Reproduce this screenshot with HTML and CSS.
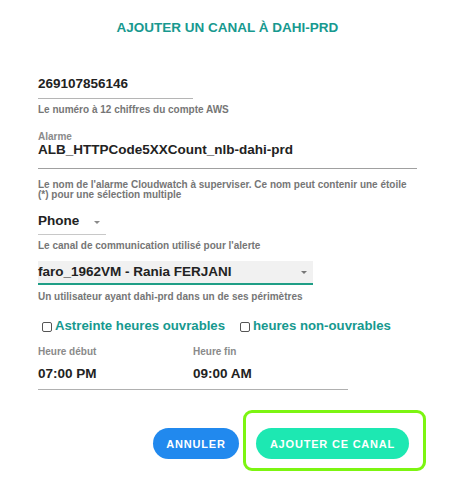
FILE: index.html
```html
<!DOCTYPE html>
<html lang="fr">
<head>
<meta charset="utf-8">
<title>Ajouter un canal</title>
<link rel="stylesheet" href="styles.css">
</head>
<body>
<div class="dialog">
  <h1 class="title">AJOUTER UN CANAL À DAHI-PRD</h1>
  <div class="form">
    <div class="field field-account">
      <div class="value">269107856146</div>
    </div>
    <div class="helper help-account">Le numéro à 12 chiffres du compte AWS</div>

    <div class="label label-alarm">Alarme</div>
    <div class="field field-alarm">
      <div class="value">ALB_HTTPCode5XXCount_nlb-dahi-prd</div>
    </div>
    <div class="helper help-alarm">Le nom de l'alarme Cloudwatch à superviser. Ce nom peut contenir une étoile (*) pour une sélection multiple</div>

    <div class="field field-channel">
      <div class="value">Phone</div>
      <span class="caret"></span>
    </div>
    <div class="helper help-channel">Le canal de communication utilisé pour l'alerte</div>

    <div class="select">
      <div class="value">faro_1962VM - Rania FERJANI</div>
      <span class="caret"></span>
    </div>
    <div class="helper help-user">Un utilisateur ayant dahi-prd dans un de ses périmètres</div>

    <div class="checks">
      <label class="check"><span class="box"></span>Astreinte heures ouvrables</label>
      <label class="check"><span class="box"></span>heures non-ouvrables</label>
    </div>

    <div class="times">
      <div class="time">
        <div class="label">Heure début</div>
        <div class="value">07:00 PM</div>
      </div>
      <div class="time">
        <div class="label">Heure fin</div>
        <div class="value">09:00 AM</div>
      </div>
    </div>
  </div>

  <div class="actions">
    <button class="btn btn-cancel">ANNULER</button>
    <span class="highlight-wrap">
      <button class="btn btn-add">AJOUTER CE CANAL</button>
      <span class="highlight"></span>
    </span>
  </div>
</div>
</body>
</html>
```

FILE: styles.css
```css
html, body {
  margin: 0;
  padding: 0;
  background: #ffffff;
}

body {
  font-family: "Liberation Sans", Arial, Helvetica, sans-serif;
  font-weight: bold;
  color: #222222;
}

.dialog {
  width: 463px;
  height: 499px;
}

.title {
  margin: 0;
  padding: 20px 8px 0 0;
  font-size: 13.5px;
  line-height: 16px;
  font-weight: bold;
  color: #17998f;
  text-align: center;
}

.form {
  padding-left: 38px;
}

.value {
  font-size: 13.5px;
  line-height: 16px;
  color: #222222;
  white-space: nowrap;
}

.helper {
  font-size: 10px;
  line-height: 12px;
  color: #767676;
}

.label {
  font-size: 10px;
  line-height: 10px;
  color: #8a8a8a;
}

.field {
  border-bottom: 1px solid #b5b5b5;
  display: flex;
  align-items: center;
}

.field-account {
  width: 155px;
  margin-top: 40px;
  padding-bottom: 6px;
}

.help-account {
  margin-top: 5px;
}

.label-alarm {
  margin-top: 16px;
}

.field-alarm {
  width: 379px;
  padding-bottom: 10px;
  border-bottom-color: #a0a0a0;
}

.help-alarm {
  margin-top: 10.5px;
  line-height: 10px;
  width: 375px;
}

.field-channel {
  width: 68px;
  margin-top: 13px;
  padding-bottom: 5px;
  border-bottom-color: #c8c8c8;
}

.caret {
  width: 0;
  height: 0;
  border-left: 3.5px solid transparent;
  border-right: 3.5px solid transparent;
  border-top: 3.5px solid #8a8a8a;
}

.field-channel .caret {
  margin-left: 15px;
  margin-top: 4px;
}

.help-channel {
  margin-top: 5.5px;
}

.select {
  width: 275px;
  box-sizing: border-box;
  margin-top: 8.5px;
  padding: 3.3px 6px 3.7px 0;
  background: #f1f1f1;
  border-bottom: 2px solid #1f9e86;
  display: flex;
  align-items: center;
  justify-content: space-between;
}

.select .caret {
  margin-top: 2px;
  border-top-color: #777777;
}

.help-user {
  margin-top: 6px;
}

.checks {
  display: flex;
  gap: 15px;
  margin-top: 15px;
  padding-left: 4px;
}

.check {
  display: flex;
  align-items: center;
  gap: 3px;
  font-size: 13.2px;
  line-height: 16px;
  color: #17998f;
}

.box {
  width: 8px;
  height: 8px;
  border: 1px solid #555555;
  border-radius: 2px;
  background: #ffffff;
  margin-top: 1px;
}

.times {
  display: flex;
  width: 310px;
  margin-top: 13px;
  padding-bottom: 7px;
  border-bottom: 1px solid #b0b0b0;
}

.time {
  width: 155px;
}

.time .value {
  margin-top: 8.5px;
}

.actions {
  display: flex;
  justify-content: flex-end;
  gap: 17px;
  padding-right: 54px;
  margin-top: 38.5px;
}

.btn {
  box-sizing: border-box;
  height: 31px;
  border: none;
  border-radius: 16px;
  padding: 0;
  font-family: "Liberation Sans", Arial, Helvetica, sans-serif;
  font-size: 11px;
  font-weight: bold;
  letter-spacing: 0.8px;
  color: #ffffff;
  white-space: nowrap;
  text-align: center;
}

.btn-cancel {
  width: 86px;
  background: #2189ee;
}

.btn-add {
  width: 153px;
  background: #1de8b2;
}

.highlight-wrap {
  position: relative;
  display: flex;
}

.highlight {
  position: absolute;
  top: -18px;
  bottom: -12px;
  left: -13px;
  right: -17px;
  border: 3px solid #7cf511;
  border-radius: 9px;
}
```
